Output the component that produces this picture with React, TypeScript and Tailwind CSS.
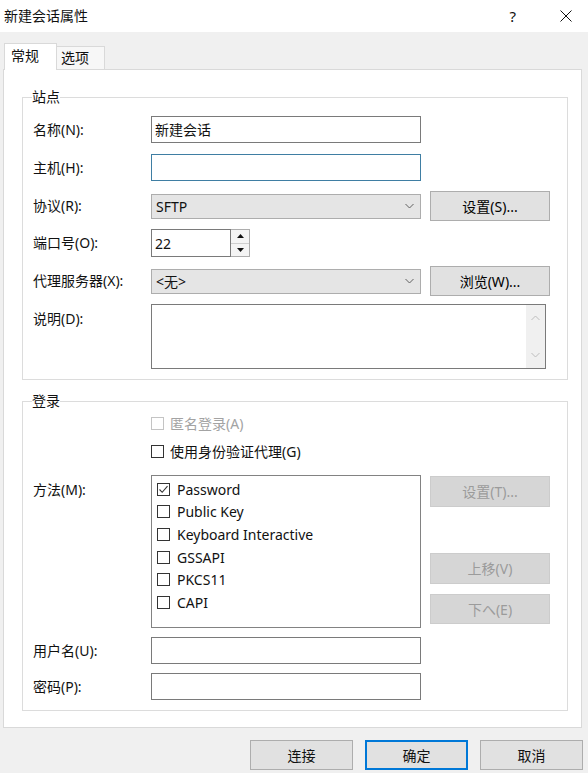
import React from 'react';

const Check = ({ checked = false, disabled = false }: { checked?: boolean; disabled?: boolean }) => (
  <span
    className={`flex h-[13px] w-[13px] shrink-0 items-center justify-center border bg-white ${
      disabled ? 'border-[#c4c4c4]' : 'border-[#333333]'
    }`}
  >
    {checked && (
      <svg width="11" height="11" viewBox="0 0 11 11">
        <polyline points="1.5,5.5 4.2,8.3 9.5,2.2" fill="none" stroke="#333" strokeWidth="1.1" />
      </svg>
    )}
  </span>
);

const Chevron = ({ up = false, color = '#606060' }: { up?: boolean; color?: string }) => (
  <svg width="9" height="6" viewBox="0 0 9 6">
    <polyline
      points={up ? '0.5,5 4.5,1 8.5,5' : '0.5,1 4.5,5 8.5,1'}
      fill="none"
      stroke={color}
      strokeWidth="1"
    />
  </svg>
);

const Btn = ({ label, disabled = false, h = 'h-[30px]' }: { label: string; disabled?: boolean; h?: string }) => (
  <div
    className={`flex w-[120px] items-center justify-center border ${h} ${
      disabled ? 'border-[#cccccc] bg-[#d6d6d6] text-[#9b9b9b]' : 'border-[#adadad] bg-[#e1e1e1] text-black'
    }`}
  >
    {label}
  </div>
);

const Select = ({ value }: { value: string }) => (
  <div className="flex h-[25px] w-[270px] items-center justify-between border border-[#adadad] bg-[#e5e5e5] pl-[4px] pr-[6px]">
    <span>{value}</span>
    <Chevron />
  </div>
);

const Label = ({ text, className = '' }: { text: string; className?: string }) => (
  <div className={`w-[118px] shrink-0 leading-[20px] ${className}`}>{text}</div>
);

const methods = [
  { name: 'Password', checked: true },
  { name: 'Public Key', checked: false },
  { name: 'Keyboard Interactive', checked: false },
  { name: 'GSSAPI', checked: false },
  { name: 'PKCS11', checked: false },
  { name: 'CAPI', checked: false },
];

export default function App() {
  return (
    <div className="flex h-[773px] w-[588px] flex-col overflow-hidden bg-[#f0f0f0] font-['Noto_Sans','Noto_Sans_CJK_SC',sans-serif] text-[14px] text-[#111]">
      {/* title bar */}
      <div className="flex h-[32px] shrink-0 items-center justify-between bg-white pl-[4px] pr-[16px]">
        <span className="leading-[20px]">新建会话属性</span>
        <div className="flex items-center gap-[44px]">
          <span className="text-[15px] leading-[20px]">?</span>
          <svg width="12" height="12" viewBox="0 0 12 12">
            <path d="M0.5 0.5 L11.5 11.5 M11.5 0.5 L0.5 11.5" stroke="#111" strokeWidth="1" />
          </svg>
        </div>
      </div>

      {/* tabs */}
      <div className="ml-[4px] mt-[11px] flex h-[26px] items-end">
        <div className="relative z-10 -mb-[1px] flex h-[27px] w-[53px] items-start border border-b-0 border-[#d9d9d9] bg-white pl-[6px] pt-[2px] leading-[20px]">
          常规
        </div>
        <div className="flex h-[23px] w-[48px] items-start border-r border-t border-[#d9d9d9] bg-[#f7f7f7] pl-[4px] pt-[1px] leading-[20px]">
          选项
        </div>
      </div>

      {/* panel */}
      <div className="mx-[3px] h-[659px] w-[579px] shrink-0 border border-[#d9d9d9] bg-white pl-[18px] pr-[13px] pt-[17px]">
        <fieldset className="border border-[#dcdcdc] px-[10px] pb-[10px] pt-[9px]">
          <legend className="ml-[-1px] px-0 leading-[20px]">站点</legend>

          <div className="flex h-[27px] items-center">
            <Label text="名称(N):" />
            <div className="flex h-[27px] w-[270px] items-center border border-[#7a7a7a] pl-[3px]">新建会话</div>
          </div>

          <div className="mt-[11px] flex h-[27px] items-center">
            <Label text="主机(H):" />
            <div className="h-[27px] w-[270px] border border-[#3f7ea3]" />
          </div>

          <div className="mt-[10px] flex h-[30px] items-center">
            <Label text="协议(R):" />
            <Select value="SFTP" />
            <div className="ml-[9px]">
              <Btn label="设置(S)..." />
            </div>
          </div>

          <div className="mt-[8px] flex h-[28px] items-center">
            <Label text="端口号(O):" />
            <div className="flex h-[28px] w-[99px]">
              <div className="flex h-full w-[80px] items-center border border-[#7a7a7a] pl-[3px]">22</div>
              <div className="flex h-full w-[19px] flex-col border border-l-0 border-[#adadad]">
                <div className="flex flex-1 items-center justify-center border-b border-[#cfcfcf] bg-[#f4f4f4]">
                  <svg width="7" height="4" viewBox="0 0 7 4"><polygon points="0,4 3.5,0 7,4" fill="#111" /></svg>
                </div>
                <div className="flex flex-1 items-center justify-center bg-[#f4f4f4]">
                  <svg width="7" height="4" viewBox="0 0 7 4"><polygon points="0,0 3.5,4 7,0" fill="#111" /></svg>
                </div>
              </div>
            </div>
          </div>

          <div className="mt-[9px] flex h-[30px] items-center">
            <Label text="代理服务器(X):" />
            <Select value="<无>" />
            <div className="ml-[9px]">
              <Btn label="浏览(W)..." />
            </div>
          </div>

          <div className="mt-[8px] flex items-start">
            <Label text="说明(D):" className="mt-[5px]" />
            <div className="flex h-[65px] w-[395px] border border-[#7a7a7a]">
              <div className="flex-1" />
              <div className="flex w-[19px] flex-col items-center justify-between bg-[#f0f0f0] py-[10px]">
                <Chevron up color="#bdbdbd" />
                <Chevron color="#bdbdbd" />
              </div>
            </div>
          </div>
        </fieldset>

        <fieldset className="mt-[11px] border border-[#dcdcdc] px-[10px] pb-[10px] pt-[2px]">
          <legend className="ml-[-1px] px-0 leading-[20px]">登录</legend>

          <div className="flex h-[20px] items-center gap-[6px] pl-[118px] text-[#a3a3a3]">
            <Check disabled />
            <span>匿名登录(A)</span>
          </div>

          <div className="mt-[8px] flex h-[20px] items-center gap-[6px] pl-[118px]">
            <Check />
            <span>使用身份验证代理(G)</span>
          </div>

          <div className="mt-[14px] flex items-start">
            <Label text="方法(M):" className="mt-[5px]" />
            <div className="h-[153px] w-[270px] border border-[#828282] pl-[5px] pt-[2px]">
              {methods.map((m) => (
                <div key={m.name} className="flex h-[22.6px] items-center gap-[7px]">
                  <Check checked={m.checked} />
                  <span>{m.name}</span>
                </div>
              ))}
            </div>
            <div className="ml-[9px] flex flex-col">
              <div className="mt-[1px]">
                <Btn label="设置(T)..." disabled h="h-[31px]" />
              </div>
              <div className="mt-[46px]">
                <Btn label="上移(V)" disabled h="h-[31px]" />
              </div>
              <div className="mt-[10px]">
                <Btn label="下へ(E)" disabled />
              </div>
            </div>
          </div>

          <div className="mt-[9px] flex h-[27px] items-center">
            <Label text="用户名(U):" />
            <div className="h-[27px] w-[270px] border border-[#7a7a7a]" />
          </div>

          <div className="mt-[9px] flex h-[27px] items-center">
            <Label text="密码(P):" />
            <div className="h-[27px] w-[270px] border border-[#7a7a7a]" />
          </div>
        </fieldset>
      </div>

      {/* dialog buttons */}
      <div className="mt-[12px] flex justify-end gap-[12px] pr-[5px]">
        <div className="flex h-[30px] w-[103px] items-center justify-center border border-[#adadad] bg-[#e1e1e1]">连接</div>
        <div className="flex h-[30px] w-[103px] items-center justify-center border-2 border-[#0078d7] bg-[#e1e1e1]">确定</div>
        <div className="flex h-[30px] w-[103px] items-center justify-center border border-[#adadad] bg-[#e1e1e1]">取消</div>
      </div>
    </div>
  );
}
